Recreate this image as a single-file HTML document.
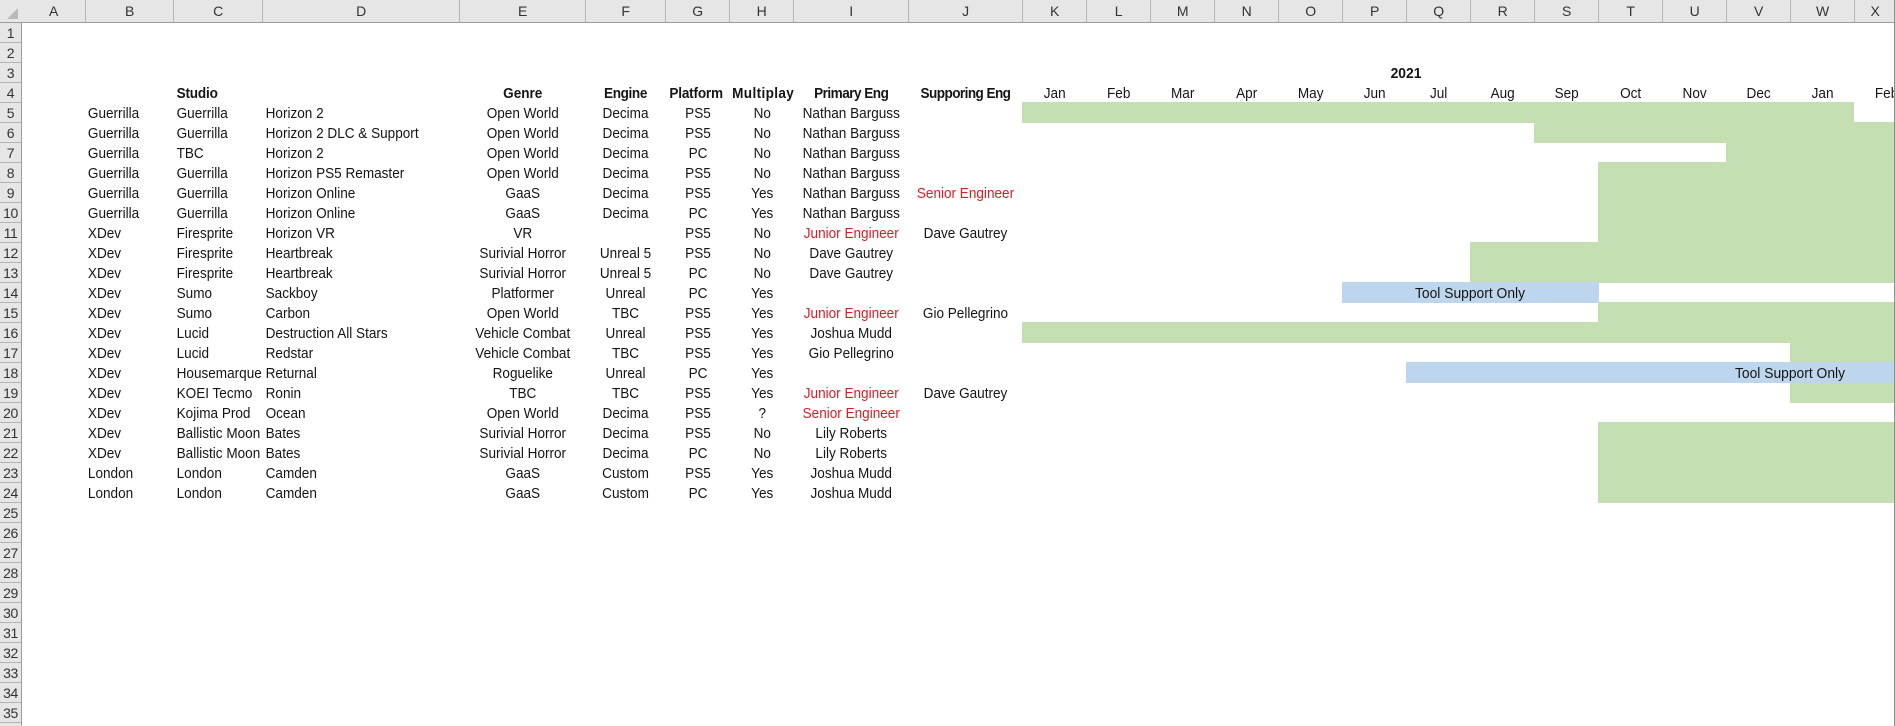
<!DOCTYPE html>
<html lang="en"><head><meta charset="utf-8"><title>Schedule</title>
<style>
html,body{margin:0;padding:0;background:#fff}
#s{position:relative;width:1895px;height:726px;overflow:hidden;background:#fff;font-family:"Liberation Sans",sans-serif;color:#151515}
#top{position:absolute;left:0;top:0;width:1895px;height:22px;background:#e6e6e6;border-bottom:1px solid #9c9c9c;box-sizing:content-box}
#top b{position:absolute;top:0;height:22px;line-height:23px;font-weight:400;font-size:14px;letter-spacing:-.3px;color:#333;text-align:center;box-sizing:border-box;border-right:1px solid #b4b4b4}
#left{position:absolute;left:0;top:23px;width:21px;height:703px;background:#e6e6e6;border-right:1px solid #9c9c9c}
#left div{height:20px;box-sizing:border-box;border-bottom:1px solid #b4b4b4;line-height:20px;font-size:14px;letter-spacing:-.4px;color:#333;text-align:center}
#tri{position:absolute;left:7px;top:8px;width:0;height:0;border-left:11px solid transparent;border-bottom:11px solid #b9b9b9}
.g,.bl{position:absolute;height:20.5px}
.g{background:#c6dfb2}
.bl{background:#bdd6ee}
#clip{position:absolute;left:0;top:0;width:1894px;height:726px;overflow:hidden}
#t{position:absolute;left:0;top:83.5px;transform:scaleX(.935);transform-origin:0 0;border-collapse:collapse;table-layout:fixed;width:2027.3px;font-size:14.5px}
#t td{height:20px;padding:0;line-height:20px;text-align:center;white-space:nowrap;vertical-align:top;overflow:visible}
#t td.l{text-align:left;padding-left:2.5px}
#t .r{color:#dc1c24}
#t tr.h td{font-weight:700}
#t tr.h td.m{font-weight:400}
.a{position:absolute;font-size:14.5px;line-height:20px;white-space:nowrap;transform:translateX(-50%) scaleX(.955)}
#edge{position:absolute;left:1894px;top:0;width:1px;height:726px;background:#8f8f8f}
</style></head><body>
<div id="s">
<div class="g" style="left:1022px;top:102px;width:832px"></div>
<div class="g" style="left:1534px;top:122px;width:360px"></div>
<div class="g" style="left:1854px;top:122px;width:40px"></div>
<div class="g" style="left:1726px;top:142px;width:168px"></div>
<div class="g" style="left:1598px;top:162px;width:296px;height:80px"></div>
<div class="g" style="left:1470px;top:242px;width:424px;height:40.5px"></div>
<div class="bl" style="left:1342px;top:282px;width:256.5px"></div>
<div class="g" style="left:1598px;top:302px;width:296px"></div>
<div class="g" style="left:1022px;top:322px;width:872px"></div>
<div class="g" style="left:1790px;top:342px;width:104px"></div>
<div class="g" style="left:1790px;top:382px;width:104px;height:20.5px"></div>
<div class="bl" style="left:1406px;top:362px;width:488px"></div>
<div class="g" style="left:1598px;top:422px;width:296px;height:80.5px"></div>

<div id="clip">
<table id="t">
<colgroup><col style="width:23.53px"><col style="width:68.02px"><col style="width:94.87px"><col style="width:95.19px"><col style="width:210.7px"><col style="width:133.69px"><col style="width:86.1px"><col style="width:68.98px"><col style="width:68.45px"><col style="width:121.93px"><col style="width:122.46px"><col style="width:68.45px"><col style="width:68.45px"><col style="width:68.45px"><col style="width:68.45px"><col style="width:68.45px"><col style="width:68.45px"><col style="width:68.45px"><col style="width:68.45px"><col style="width:68.45px"><col style="width:68.45px"><col style="width:68.45px"><col style="width:68.45px"><col style="width:68.45px"><col style="width:68.45px"></colgroup>
<tr class="h"><td></td><td></td><td></td><td class="l" style="letter-spacing:-.2px">Studio</td><td></td><td>Genre</td><td style="letter-spacing:-.4px">Engine</td><td style="letter-spacing:-.2px;position:relative;left:-2px">Platform</td><td style="letter-spacing:.39px;position:relative;left:1px">Multiplay</td><td style="letter-spacing:-.55px">Primary Eng</td><td style="letter-spacing:-.6px">Supporing Eng</td><td class="m">Jan</td><td class="m">Feb</td><td class="m">Mar</td><td class="m">Apr</td><td class="m">May</td><td class="m">Jun</td><td class="m">Jul</td><td class="m">Aug</td><td class="m">Sep</td><td class="m">Oct</td><td class="m">Nov</td><td class="m">Dec</td><td class="m">Jan</td><td class="m">Feb</td></tr>
<tr><td></td><td></td><td class="l">Guerrilla</td><td class="l">Guerrilla</td><td class="l">Horizon 2</td><td>Open World</td><td>Decima</td><td>PS5</td><td>No</td><td>Nathan Barguss</td><td></td></tr>
<tr><td></td><td></td><td class="l">Guerrilla</td><td class="l">Guerrilla</td><td class="l">Horizon 2 DLC &amp; Support</td><td>Open World</td><td>Decima</td><td>PS5</td><td>No</td><td>Nathan Barguss</td><td></td></tr>
<tr><td></td><td></td><td class="l">Guerrilla</td><td class="l">TBC</td><td class="l">Horizon 2</td><td>Open World</td><td>Decima</td><td>PC</td><td>No</td><td>Nathan Barguss</td><td></td></tr>
<tr><td></td><td></td><td class="l">Guerrilla</td><td class="l">Guerrilla</td><td class="l">Horizon PS5 Remaster</td><td>Open World</td><td>Decima</td><td>PS5</td><td>No</td><td>Nathan Barguss</td><td></td></tr>
<tr><td></td><td></td><td class="l">Guerrilla</td><td class="l">Guerrilla</td><td class="l">Horizon Online</td><td>GaaS</td><td>Decima</td><td>PS5</td><td>Yes</td><td>Nathan Barguss</td><td class="r">Senior Engineer</td></tr>
<tr><td></td><td></td><td class="l">Guerrilla</td><td class="l">Guerrilla</td><td class="l">Horizon Online</td><td>GaaS</td><td>Decima</td><td>PC</td><td>Yes</td><td>Nathan Barguss</td><td></td></tr>
<tr><td></td><td></td><td class="l">XDev</td><td class="l">Firesprite</td><td class="l">Horizon VR</td><td>VR</td><td></td><td>PS5</td><td>No</td><td class="r">Junior Engineer</td><td>Dave Gautrey</td></tr>
<tr><td></td><td></td><td class="l">XDev</td><td class="l">Firesprite</td><td class="l">Heartbreak</td><td>Surivial Horror</td><td>Unreal 5</td><td>PS5</td><td>No</td><td>Dave Gautrey</td><td></td></tr>
<tr><td></td><td></td><td class="l">XDev</td><td class="l">Firesprite</td><td class="l">Heartbreak</td><td>Surivial Horror</td><td>Unreal 5</td><td>PC</td><td>No</td><td>Dave Gautrey</td><td></td></tr>
<tr><td></td><td></td><td class="l">XDev</td><td class="l">Sumo</td><td class="l">Sackboy</td><td>Platformer</td><td>Unreal</td><td>PC</td><td>Yes</td><td></td><td></td></tr>
<tr><td></td><td></td><td class="l">XDev</td><td class="l">Sumo</td><td class="l">Carbon</td><td>Open World</td><td>TBC</td><td>PS5</td><td>Yes</td><td class="r">Junior Engineer</td><td>Gio Pellegrino</td></tr>
<tr><td></td><td></td><td class="l">XDev</td><td class="l">Lucid</td><td class="l">Destruction All Stars</td><td>Vehicle Combat</td><td>Unreal</td><td>PS5</td><td>Yes</td><td>Joshua Mudd</td><td></td></tr>
<tr><td></td><td></td><td class="l">XDev</td><td class="l">Lucid</td><td class="l">Redstar</td><td>Vehicle Combat</td><td>TBC</td><td>PS5</td><td>Yes</td><td>Gio Pellegrino</td><td></td></tr>
<tr><td></td><td></td><td class="l">XDev</td><td class="l">Housemarque</td><td class="l">Returnal</td><td>Roguelike</td><td>Unreal</td><td>PC</td><td>Yes</td><td></td><td></td></tr>
<tr><td></td><td></td><td class="l">XDev</td><td class="l">KOEI Tecmo</td><td class="l">Ronin</td><td>TBC</td><td>TBC</td><td>PS5</td><td>Yes</td><td class="r">Junior Engineer</td><td>Dave Gautrey</td></tr>
<tr><td></td><td></td><td class="l">XDev</td><td class="l">Kojima Prod</td><td class="l">Ocean</td><td>Open World</td><td>Decima</td><td>PS5</td><td>?</td><td class="r">Senior Engineer</td><td></td></tr>
<tr><td></td><td></td><td class="l">XDev</td><td class="l">Ballistic Moon</td><td class="l">Bates</td><td>Surivial Horror</td><td>Decima</td><td>PS5</td><td>No</td><td>Lily Roberts</td><td></td></tr>
<tr><td></td><td></td><td class="l">XDev</td><td class="l">Ballistic Moon</td><td class="l">Bates</td><td>Surivial Horror</td><td>Decima</td><td>PC</td><td>No</td><td>Lily Roberts</td><td></td></tr>
<tr><td></td><td></td><td class="l">London</td><td class="l">London</td><td class="l">Camden</td><td>GaaS</td><td>Custom</td><td>PS5</td><td>Yes</td><td>Joshua Mudd</td><td></td></tr>
<tr><td></td><td></td><td class="l">London</td><td class="l">London</td><td class="l">Camden</td><td>GaaS</td><td>Custom</td><td>PC</td><td>Yes</td><td>Joshua Mudd</td><td></td></tr>
</table>
<div class="a" style="left:1406px;top:63.5px;font-weight:700">2021</div>
<div class="a" style="left:1470px;top:283.5px">Tool Support Only</div>
<div class="a" style="left:1790px;top:363.5px">Tool Support Only</div>
</div>

<div id="top">
<b style="left:22px;width:64px">A</b><b style="left:86px;width:88px">B</b><b style="left:174px;width:89px">C</b><b style="left:263px;width:197px">D</b><b style="left:460px;width:126px">E</b><b style="left:586px;width:80px">F</b><b style="left:666px;width:64px">G</b><b style="left:730px;width:64px">H</b><b style="left:794px;width:115px">I</b><b style="left:909px;width:114px">J</b><b style="left:1023px;width:64px">K</b><b style="left:1087px;width:64px">L</b><b style="left:1151px;width:64px">M</b><b style="left:1215px;width:64px">N</b><b style="left:1279px;width:64px">O</b><b style="left:1343px;width:64px">P</b><b style="left:1407px;width:64px">Q</b><b style="left:1471px;width:64px">R</b><b style="left:1535px;width:64px">S</b><b style="left:1599px;width:64px">T</b><b style="left:1663px;width:64px">U</b><b style="left:1727px;width:64px">V</b><b style="left:1791px;width:64px">W</b><b style="left:1855px;width:40px;border-right:0">X</b>
<div id="tri"></div>
</div>
<div id="left">
<div>1</div><div>2</div><div>3</div><div>4</div><div>5</div><div>6</div><div>7</div><div>8</div><div>9</div><div>10</div><div>11</div><div>12</div><div>13</div><div>14</div><div>15</div><div>16</div><div>17</div><div>18</div><div>19</div><div>20</div><div>21</div><div>22</div><div>23</div><div>24</div><div>25</div><div>26</div><div>27</div><div>28</div><div>29</div><div>30</div><div>31</div><div>32</div><div>33</div><div>34</div><div>35</div>
</div>
<div id="edge"></div>
</div>
</body></html>
